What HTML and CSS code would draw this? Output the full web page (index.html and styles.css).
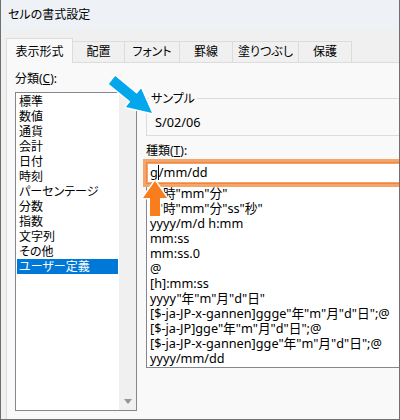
FILE: index.html
```html
<!DOCTYPE html>
<html lang="ja">
<head>
<meta charset="utf-8">
<title>セルの書式設定</title>
<link rel="stylesheet" href="styles.css">
</head>
<body>
<div class="window">
  <div class="titlebar">セルの書式設定</div>
  <div class="body">
    <div class="tabs">
      <div class="tab tab-1 active">表示形式</div>
      <div class="tab tab-2">配置</div>
      <div class="tab tab-3">フォント</div>
      <div class="tab tab-4">罫線</div>
      <div class="tab tab-5">塗りつぶし</div>
      <div class="tab tab-6">保護</div>
    </div>
    <div class="panel">
      <div class="left">
        <div class="label">分類(<u>C</u>):</div>
        <div class="listbox">
          <ul class="items">
            <li>標準</li>
            <li>数値</li>
            <li>通貨</li>
            <li>会計</li>
            <li>日付</li>
            <li>時刻</li>
            <li>パーセンテージ</li>
            <li>分数</li>
            <li>指数</li>
            <li>文字列</li>
            <li>その他</li>
            <li class="selected">ユーザー定義</li>
          </ul>
          <div class="scrollbar"><span class="down"></span></div>
        </div>
      </div>
      <div class="right">
        <fieldset class="sample">
          <legend>サンプル</legend>
          <div class="sample-val">S/02/06</div>
        </fieldset>
        <div class="label">種類(<u>T</u>):</div>
        <div class="input">g<span class="caret"></span>/mm/dd</div>
        <ul class="typelist">
          <li>h"時"mm"分"</li>
          <li>h"時"mm"分"ss"秒"</li>
          <li>yyyy/m/d h:mm</li>
          <li>mm:ss</li>
          <li>mm:ss.0</li>
          <li>@</li>
          <li>[h]:mm:ss</li>
          <li>yyyy"年"m"月"d"日"</li>
          <li>[$-ja-JP-x-gannen]ggge"年"m"月"d"日";@</li>
          <li>[$-ja-JP]gge"年"m"月"d"日";@</li>
          <li>[$-ja-JP-x-gannen]gge"年"m"月"d"日";@</li>
          <li>yyyy/mm/dd</li>
        </ul>
      </div>
    </div>
  </div>
  <div class="highlight"></div>
  <svg class="arrows" width="400" height="420" viewBox="0 0 400 420">
    <polygon class="arrow-blue" points="115.2,76.1 136.7,93.8 141.1,88.4 152,113 125.9,107 130.3,101.6 108.8,83.9"/>
    <polygon class="arrow-orange" points="155,181 167,198 160,198 160,216 150,216 150,198 143,198"/>
  </svg>
</div>
</body>
</html>
```
FILE: styles.css
```css
* { box-sizing: border-box; }
html, body { margin: 0; padding: 0; }
body {
  font-family: "Noto Sans", "Noto Sans CJK JP", sans-serif;
  font-size: 12.7px;
  font-feature-settings: "palt";
  color: #000;
  background: #fff;
}
.window {
  position: relative;
  width: 400px;
  height: 420px;
  border: 1px solid #6f6f6f;
  border-top: none;
  overflow: hidden;
  background: #f0f0f0;
}
.titlebar {
  height: 30px;
  line-height: 30px;
  padding-left: 7px;
  background: #eef2f7;
  font-size: 12px;
}
.body {
  padding: 8px 0 0 5px;
}
.tabs {
  display: flex;
  align-items: flex-end;
  height: 24px;
  position: relative;
  z-index: 1;
}
.tab {
  height: 21px;
  line-height: 20px;
  text-align: center;
  font-size: 12px;
  border: 1px solid #dcdcdc;
  border-bottom: none;
  border-left: none;
  background: #f0f0f0;
}
.tab.active {
  height: 25px;
  line-height: 26px;
  border-left: 1px solid #dcdcdc;
  background: #f9f9f9;
  margin-bottom: -1px;
}
.tab-1 { width: 67px; }
.tab-2 { width: 52px; }
.tab-3 { width: 55px; }
.tab-4 { width: 53px; }
.tab-5 { width: 66px; }
.tab-6 { width: 53px; }
.panel {
  display: flex;
  gap: 9px;
  width: 420px;
  height: 380px;
  border: 1px solid #dcdcdc;
  background: #f9f9f9;
  padding: 8px 0 0 8px;
}
.label {
  height: 15px;
  line-height: 15px;
  font-size: 12px;
}
.left .label { margin-bottom: 6px; }
.listbox {
  display: flex;
  width: 122px;
  height: 319px;
  border: 1px solid #828790;
  background: #fff;
}
.items {
  flex: 1;
  list-style: none;
  margin: 0;
  padding: 1px;
}
.items li {
  height: 15px;
  line-height: 15px;
  padding-left: 2px;
  font-size: 12px;
  white-space: nowrap;
}
.items li.selected {
  background: #0078d7;
  color: #fff;
}
.scrollbar {
  width: 17px;
  background: #f0f0f0;
  display: flex;
  align-items: flex-end;
  justify-content: center;
  padding-bottom: 6px;
}
.down {
  width: 0;
  height: 0;
  border-left: 4px solid transparent;
  border-right: 4px solid transparent;
  border-top: 5px solid #959595;
}
.right {
  flex: 1;
  padding-top: 20px;
}
.sample {
  margin: 0;
  padding: 0 0 5px 2px;
  border: 1px solid #dcdcdc;
  min-width: 0;
}
.sample legend {
  padding: 0 2px;
  height: 15px;
  line-height: 15px;
  font-size: 12px;
}
.sample-val {
  margin-top: 9px;
  padding-left: 6px;
  height: 15px;
  line-height: 15px;
}
.right .label { margin-top: 7px; }
.input {
  margin-top: 4px;
  height: 23px;
  border: 1px solid #7a7a7a;
  background: #fff;
  padding: 2px 0 0 3px;
  line-height: 15px;
  white-space: nowrap;
}
.caret {
  display: inline-block;
  width: 1px;
  height: 15px;
  background: #000;
  vertical-align: top;
}
.typelist {
  list-style: none;
  margin: -1px 0 0 0;
  padding: 1px 0 1px 3px;
  border: 1px solid #828790;
  background: #fff;
}
.typelist li {
  height: 15px;
  line-height: 15px;
  white-space: nowrap;
}
.highlight {
  position: absolute;
  left: 142px;
  top: 159px;
  width: 270px;
  height: 28px;
  border: 3px solid #f7a468;
  box-shadow: inset 0 0 0 1px #e7894c, inset 0 0 0 2px #f7a468;
}
.arrows {
  position: absolute;
  left: -1px;
  top: 0;
  pointer-events: none;
}
.arrow-blue {
  fill: #05a7ec;
  stroke: #fff;
  stroke-width: 3;
  paint-order: stroke;
  stroke-linejoin: round;
}
.arrow-orange {
  fill: #f97d1d;
  stroke: #fff;
  stroke-width: 3;
  paint-order: stroke;
  stroke-linejoin: round;
}
```
